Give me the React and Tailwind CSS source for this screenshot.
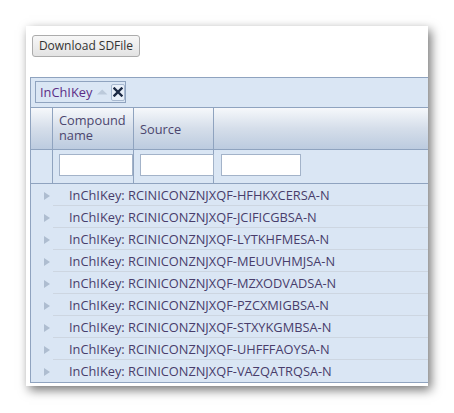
import React from "react";

const keys = [
  "HFHKXCERSA-N",
  "JCIFICGBSA-N",
  "LYTKHFMESA-N",
  "MEUUVHMJSA-N",
  "MZXODVADSA-N",
  "PZCXMIGBSA-N",
  "STXYKGMBSA-N",
  "UHFFFAOYSA-N",
  "VAZQATRQSA-N",
];

function Arrow() {
  return (
    <svg width="6" height="8" viewBox="0 0 6 8" className="block">
      <path d="M0 0 L6 4 L0 8 Z" fill="#aebdd0" />
    </svg>
  );
}

export default function App() {
  return (
    <div className="w-[454px] h-[413px] bg-white pl-[26px] pt-[26px] font-['Open_Sans',sans-serif] text-[12.8px]">
      <div className="w-[402px] h-[360px] bg-white overflow-hidden shadow-[3px_4px_10px_rgba(0,0,0,0.55)]">
        <div className="pl-[6px] pt-[9px]">
          <button className="h-[22px] w-[108px] rounded-[3px] border border-[#acacac] bg-gradient-to-b from-[#f7f7f7] to-[#e3e3e3] text-[12px] leading-[20px] text-[#333] font-['Open_Sans',sans-serif]">
            Download SDFile
          </button>
        </div>
        <div className="ml-[4px] mt-[20px] w-[420px] border-l border-t border-b border-[#8fa3bf] bg-[#dae6f4]">
          {/* group panel */}
          <div className="h-[30px] border-b border-[#8fa3bf] pl-[4px] pt-[3px]">
            <div className="flex h-[22px] w-[91px] items-center border border-[#8fa3bf] pl-[4px]">
              <span className="text-[#5a2d86] leading-none">InChIKey</span>
              <svg width="12" height="8" viewBox="0 0 12 8" className="ml-[5px]">
                <path d="M0 7 L6 1 L12 7 Z" fill="#bccadb" />
              </svg>
              <div className="ml-[3px] flex h-[17px] w-[16px] items-center justify-center rounded-[2px] border border-[#a8b9d0] bg-[#e8eff8]">
                <svg width="10" height="10" viewBox="0 0 10 10">
                  <path d="M1.5 1.5 L8.5 8.5 M8.5 1.5 L1.5 8.5" stroke="#1c2a44" strokeWidth="2.4" strokeLinecap="square" />
                </svg>
              </div>
            </div>
          </div>
          {/* header */}
          <div className="flex h-[42px] border-b border-[#8fa3bf] bg-gradient-to-b from-[#f6f8fb] via-[#d5deea] to-[#bccbdf] text-[#4c466e]">
            <div className="w-[22px] shrink-0 border-r border-[#8fa3bf]" />
            <div className="w-[81px] shrink-0 border-r border-[#8fa3bf] pl-[6px] pt-[5px] leading-[15px]">
              <div>Compound</div>
              <div>name</div>
            </div>
            <div className="w-[80px] shrink-0 border-r border-[#8fa3bf] pl-[6px] pt-[2px] flex items-center">
              Source
            </div>
            <div className="flex-1" />
          </div>
          {/* filter row */}
          <div className="flex h-[34px] border-b border-[#8fa3bf]">
            <div className="w-[22px] shrink-0 border-r border-[#8fa3bf]" />
            <div className="w-[81px] shrink-0 border-r border-[#8fa3bf] pl-[6px] pt-[4px] overflow-visible">
              <div className="h-[22px] w-[74px] border border-[#a3b3c9] bg-white" />
            </div>
            <div className="w-[80px] shrink-0 border-r border-[#8fa3bf] pl-[6px] pt-[4px]">
              <div className="h-[22px] w-[74px] border border-[#a3b3c9] bg-white" />
            </div>
            <div className="flex-1 pl-[7px] pt-[4px]">
              <div className="h-[22px] w-[80px] border border-[#a3b3c9] bg-white" />
            </div>
          </div>
          {/* rows */}
          {keys.map((k, i) => (
            <div key={k} className="flex h-[22px]">
              <div className="w-[22px] shrink-0 flex items-center pl-[13px] pt-[2px]">
                <Arrow />
              </div>
              <div
                className={
                  "flex-1 pl-[16px] pt-[2px] flex items-center text-[#483d6b] " +
                  (i < keys.length - 1 ? "border-b border-[#cdd6e1]" : "")
                }
              >
                InChIKey: RCINICONZNJXQF-{k}
              </div>
            </div>
          ))}
        </div>
      </div>
    </div>
  );
}
